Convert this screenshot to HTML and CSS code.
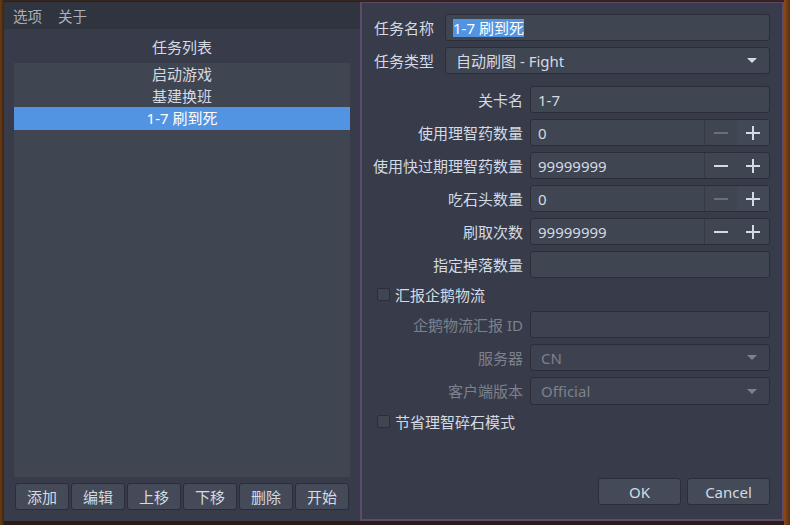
FILE: index.html
```html
<!DOCTYPE html>
<html>
<head>
<meta charset="utf-8">
<link rel="stylesheet" href="styles.css">
</head>
<body>
<div class="desk">
  <div class="main-win">
    <div class="menubar"><span>选项</span><span>关于</span></div>
    <div class="main-body">
      <div class="list-title">任务列表</div>
      <div class="task-list">
        <div class="item">启动游戏</div>
        <div class="item">基建换班</div>
        <div class="item sel">1-7 刷到死</div>
      </div>
      <div class="btn-row">
        <button class="btn">添加</button>
        <button class="btn">编辑</button>
        <button class="btn">上移</button>
        <button class="btn">下移</button>
        <button class="btn">删除</button>
        <button class="btn">开始</button>
      </div>
    </div>
  </div>
  <div class="dialog">
    <div class="top-form">
      <label class="lbl-l">任务名称</label>
      <div class="field"><span class="hl">1-7 刷到死</span></div>
      <label class="lbl-l">任务类型</label>
      <div class="field combo"><span>自动刷图 - Fight</span><i class="arrow"></i></div>
    </div>
    <div class="sub-form">
      <label class="lbl">关卡名</label>
      <div class="field">1-7</div>
      <label class="lbl">使用理智药数量</label>
      <div class="field spin"><span class="val">0</span><span class="sb dis"><i class="minus"></i></span><span class="sb hov"><i class="plus"></i></span></div>
      <label class="lbl">使用快过期理智药数量</label>
      <div class="field spin"><span class="val">99999999</span><span class="sb"><i class="minus"></i></span><span class="sb"><i class="plus"></i></span></div>
      <label class="lbl">吃石头数量</label>
      <div class="field spin"><span class="val">0</span><span class="sb dis"><i class="minus"></i></span><span class="sb hov"><i class="plus"></i></span></div>
      <label class="lbl">刷取次数</label>
      <div class="field spin"><span class="val">99999999</span><span class="sb"><i class="minus"></i></span><span class="sb"><i class="plus"></i></span></div>
      <label class="lbl">指定掉落数量</label>
      <div class="field"></div>
      <div class="check-row"><span class="box"></span>汇报企鹅物流</div>
      <label class="lbl disabled">企鹅物流汇报 ID</label>
      <div class="field off"></div>
      <label class="lbl disabled">服务器</label>
      <div class="field combo off"><span>CN</span><i class="arrow"></i></div>
      <label class="lbl disabled">客户端版本</label>
      <div class="field combo off"><span>Official</span><i class="arrow"></i></div>
      <div class="check-row"><span class="box"></span>节省理智碎石模式</div>
    </div>
    <div class="dlg-btns">
      <button class="btn wide">OK</button>
      <button class="btn wide">Cancel</button>
    </div>
  </div>
</div>
</body>
</html>
```
FILE: styles.css
```css
* { box-sizing: border-box; }
html, body {
  margin: 0;
  width: 790px;
  height: 525px;
  overflow: hidden;
}
body {
  background:
    linear-gradient(90deg, #6a3d16 0px, #3a2412 4px, transparent 4px, transparent 784px, #8a4a1c 784px, #5a2e12 790px),
    linear-gradient(180deg, #3b2a22 0px, #2a1c16 2px, #2a1c16 100%);
  font-family: "Noto Sans", "Noto Sans CJK SC", sans-serif;
  font-size: 15px;
  color: #d3dae3;
}
.desk {
  display: flex;
  padding: 2px 6px 4px 4px;
  height: 525px;
}
.main-win {
  width: 356px;
  display: flex;
  flex-direction: column;
  background: #383c4a;
}
.menubar {
  height: 27px;
  background: #2f343f;
  display: flex;
  align-items: center;
  gap: 16px;
  padding-left: 9px;
  color: #a9b0bb;
  font-size: 14.5px;
}
.main-body {
  flex: 1;
  display: flex;
  flex-direction: column;
  padding: 8px 10px 11px 10px;
}
.list-title {
  text-align: center;
  line-height: 20px;
  height: 20px;
  margin-bottom: 6px;
}
.task-list {
  flex: 1;
  background: #404552;
}
.item {
  height: 22px;
  line-height: 22px;
  text-align: center;
}
.item.sel {
  height: 23px;
  background: #5294e2;
  color: #ffffff;
}
.btn-row {
  margin-top: 6px;
  display: grid;
  grid-template-columns: repeat(6, 1fr);
  gap: 2px;
  padding: 0 1px;
}
.btn {
  height: 27px;
  background: #444a58;
  border: 1px solid #2b2e39;
  border-radius: 3px;
  color: #d3dae3;
  font-family: inherit;
  font-size: 15px;
  line-height: 20px;
  padding: 0;
}
.dialog {
  width: 424px;
  background: #383c4a;
  border: 2px solid #5e4a6b;
  border-top-width: 1px;
  padding: 11px 12px 14px 12px;
  display: flex;
  flex-direction: column;
}
.top-form {
  display: grid;
  grid-template-columns: 71px 1fr;
  grid-template-rows: 27px 27px;
  row-gap: 6px;
}
.lbl-l {
  display: flex;
  align-items: center;
  line-height: 20px;
}
.field {
  height: 27px;
  background: #404552;
  border: 1px solid #2b2e39;
  border-radius: 3px;
  display: flex;
  align-items: center;
  padding-left: 7px;
  line-height: 20px;
}
.field.off {
  background: #3e4250;
  color: #7c818c;
}
.hl {
  background: #5294e2;
  color: #fff;
  line-height: 18px;
}
.combo {
  padding-left: 10px;
  padding-right: 12px;
  justify-content: space-between;
}
.arrow {
  width: 0;
  height: 0;
  border-left: 5px solid transparent;
  border-right: 5px solid transparent;
  border-top: 5px solid #d3dae3;
}
.off .arrow { border-top-color: #7c818c; }
.sub-form {
  margin-top: 12px;
  display: grid;
  grid-template-columns: 149px 1fr;
  grid-template-rows: 27px 27px 27px 27px 27px 27px 21px 27px 27px 28px 21px;
  column-gap: 7px;
  row-gap: 6px;
}
.lbl {
  display: flex;
  align-items: center;
  justify-content: flex-end;
  white-space: nowrap;
  line-height: 20px;
}
.lbl.disabled { color: #7c818c; }
.sub-form .field { height: 100%; }
.spin { padding: 0; }
.spin .val {
  flex: 1;
  padding-left: 7px;
}
.sb {
  width: 33px;
  height: 100%;
  border-left: 1px solid #353946;
  display: flex;
  align-items: center;
  justify-content: center;
  color: #d3dae3;
}
.sb + .sb { width: 32px; border-left: 0; }
.sb.hov { background: #434856; }
.minus, .plus {
  position: relative;
  width: 14px;
  height: 14px;
  display: block;
}
.minus::before, .plus::before, .plus::after {
  content: "";
  position: absolute;
  background: currentColor;
}
.minus::before, .plus::before {
  left: 0; right: 0; top: 6px; height: 2px;
}
.plus::after {
  top: 0; bottom: 0; left: 6px; width: 2px;
}
.sb.dis { color: #6a6f7b; }
.check-row {
  grid-column: 1 / 3;
  display: flex;
  align-items: center;
  padding-left: 3px;
  line-height: 20px;
}
.box {
  width: 13px;
  height: 13px;
  background: #404552;
  border: 1px solid #2b2e39;
  border-radius: 2px;
  margin-right: 5px;
}
.dlg-btns {
  margin-top: auto;
  display: flex;
  justify-content: flex-end;
  gap: 6px;
}
.btn.wide { width: 83px; }
```
